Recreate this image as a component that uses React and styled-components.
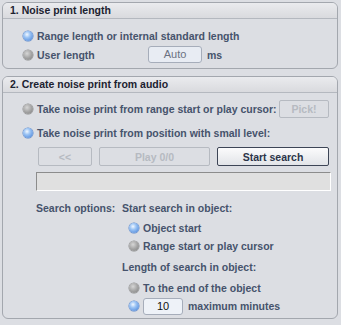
import styled, { createGlobalStyle } from "styled-components";

const GlobalStyle = createGlobalStyle`
  body {
    margin: 0;
    background: #dcdee3;
    font-family: "Liberation Sans", Arial, sans-serif;
    font-size: 10.5px;
    font-weight: bold;
    color: #46536c;
  }
`;

const Page = styled.div`
  display: flex;
  flex-direction: column;
  gap: 7px;
  width: 336px;
  padding: 2px 0 0 2px;
`;

const Panel = styled.section`
  border: 1px solid #a3a7ae;
  border-radius: 6px;
  overflow: hidden;
`;

const PanelHeader = styled.div`
  height: 15px;
  line-height: 15px;
  padding-left: 7px;
  font-size: 10.5px;
  color: #1c2230;
  background: linear-gradient(#eaebee, #d9dade);
  border-bottom: 1px solid #b4b8bf;
`;

const PanelBody = styled.div`
  display: flex;
  flex-direction: column;
  padding: ${(p) => p.$pad};
`;

const Row = styled.div`
  display: flex;
  align-items: center;
  height: ${(p) => p.$h || 19}px;
  margin-top: ${(p) => p.$mt || 0}px;
  margin-left: ${(p) => p.$ml || 0}px;
`;

const Radio = styled.span`
  flex: none;
  width: 10px;
  height: 10px;
  border-radius: 50%;
  background: ${(p) =>
    p.$on
      ? "radial-gradient(circle at 40% 35%, #f2f8ff 0%, #9cc4f4 35%, #3d7bd6 100%)"
      : "radial-gradient(circle at 40% 35%, #d6d6d6 0%, #a4a4a4 50%, #7c7c7c 100%)"};
  box-shadow: 0 0 0 0.5px ${(p) => (p.$on ? "#5a86c8" : "#8d8d8d")};
`;

const Label = styled.span`
  margin-left: 4px;
  white-space: nowrap;
  width: ${(p) => (p.$w !== undefined ? `${p.$w}px` : "auto")};
`;

const Field = styled.div`
  box-sizing: border-box;
  width: ${(p) => p.$w}px;
  height: 17px;
  line-height: 15px;
  text-align: center;
  font-size: 11px;
  font-weight: normal;
  color: ${(p) => (p.$dark ? "#111" : "#6b7282")};
  background: ${(p) => (p.$dark ? "#eef2f8" : "#e8ecf3")};
  border: 1px solid #a6adba;
  border-radius: 3px;
  margin-right: 3px;
`;

const Unit = styled.span`
  margin-left: 2px;
`;

const Button = styled.button`
  box-sizing: border-box;
  width: ${(p) => p.$w}px;
  height: ${(p) => p.$h || 19}px;
  margin-left: ${(p) => p.$ml || 0}px;
  padding: 0;
  font: inherit;
  font-weight: bold;
  border-radius: 2px;
  color: ${(p) => (p.disabled ? "#b6bac1" : "#2b3549")};
  border: 1px solid ${(p) => (p.disabled ? "#b6bac1" : "#3d4556")};
  background: ${(p) =>
    p.disabled ? "transparent" : "linear-gradient(#fbfbfc, #e2e4e8)"};
`;

const PickButton = styled(Button)`
  margin-left: auto;
`;

const Progress = styled.div`
  box-sizing: border-box;
  width: 295px;
  height: 19px;
  margin: 6px 0 0 13px;
  background: #e0e0e0;
  border: 1px solid;
  border-color: #8c8c8c #ffffff #ffffff #8c8c8c;
`;

const Options = styled.div`
  display: grid;
  grid-template-columns: 86px 1fr;
  margin: 9px 0 0 13px;
`;

const OptionTitle = styled.div`
  height: 16px;
  line-height: 16px;
  margin-top: ${(p) => p.$mt || 0}px;
  white-space: nowrap;
`;

const OptionList = styled.div`
  display: flex;
  flex-direction: column;
`;

export default function App() {
  return (
    <>
      <GlobalStyle />
      <Page>
        <Panel>
          <PanelHeader>1. Noise print length</PanelHeader>
          <PanelBody $pad="7px 0 4px 20px">
            <Row>
              <Radio $on />
              <Label>Range length or internal standard length</Label>
            </Row>
            <Row>
              <Radio />
              <Label $w={111}>User length</Label>
              <Field $w={54}>Auto</Field>
              <Unit>ms</Unit>
            </Row>
          </PanelBody>
        </Panel>

        <Panel>
          <PanelHeader>2. Create noise print from audio</PanelHeader>
          <PanelBody $pad="7px 8px 3px 20px">
            <Row $h={18}>
              <Radio />
              <Label>Take noise print from range start or play cursor:</Label>
              <PickButton disabled $w={50} $h={18}>
                Pick!
              </PickButton>
            </Row>
            <Row $h={18} $mt={6}>
              <Radio $on />
              <Label>Take noise print from position with small level:</Label>
            </Row>
            <Row $h={19} $mt={5} $ml={15}>
              <Button disabled $w={54}>&lt;&lt;</Button>
              <Button disabled $w={111} $ml={7}>Play 0/0</Button>
              <Button $w={112} $ml={7}>Start search</Button>
            </Row>
            <Progress />
            <Options>
              <OptionTitle>Search options:</OptionTitle>
              <OptionList>
                <OptionTitle>Start search in object:</OptionTitle>
                <Row $h={18} $mt={3} $ml={7}>
                  <Radio $on />
                  <Label>Object start</Label>
                </Row>
                <Row $h={18} $ml={7}>
                  <Radio />
                  <Label>Range start or play cursor</Label>
                </Row>
                <OptionTitle $mt={4}>Length of search in object:</OptionTitle>
                <Row $h={18} $mt={4} $ml={7}>
                  <Radio />
                  <Label>To the end of the object</Label>
                </Row>
                <Row $h={18} $ml={7}>
                  <Radio $on />
                  <Label $w={0} />
                  <Field $w={40} $dark>10</Field>
                  <Unit>maximum minutes</Unit>
                </Row>
              </OptionList>
            </Options>
          </PanelBody>
        </Panel>
      </Page>
    </>
  );
}
